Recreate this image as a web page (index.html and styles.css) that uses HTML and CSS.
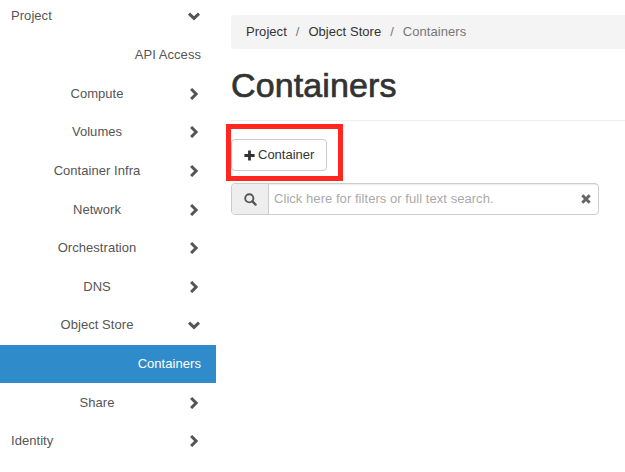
FILE: index.html
```html
<!DOCTYPE html>
<html lang="en">
<head>
<meta charset="utf-8">
<title>Containers</title>
<link rel="stylesheet" href="styles.css">
</head>
<body>
<svg width="0" height="0" class="defs">
  <symbol id="down" viewBox="0 0 12 12"><path d="M1 3.6 6 8.4l5-4.8"/></symbol>
  <symbol id="right" viewBox="0 0 12 12"><path d="M3.1 1 8.1 6l-5 5"/></symbol>
</svg>
<div class="layout">
  <nav class="sidebar">
    <a class="item top"><span>Project</span><svg class="chevron"><use href="#down"/></svg></a>
    <a class="item leaf">API Access</a>
    <a class="item"><span>Compute</span><svg class="chevron"><use href="#right"/></svg></a>
    <a class="item"><span>Volumes</span><svg class="chevron"><use href="#right"/></svg></a>
    <a class="item"><span>Container Infra</span><svg class="chevron"><use href="#right"/></svg></a>
    <a class="item"><span>Network</span><svg class="chevron"><use href="#right"/></svg></a>
    <a class="item"><span>Orchestration</span><svg class="chevron"><use href="#right"/></svg></a>
    <a class="item"><span>DNS</span><svg class="chevron"><use href="#right"/></svg></a>
    <a class="item"><span>Object Store</span><svg class="chevron"><use href="#down"/></svg></a>
    <a class="item leaf active">Containers</a>
    <a class="item"><span>Share</span><svg class="chevron"><use href="#right"/></svg></a>
    <a class="item top"><span>Identity</span><svg class="chevron"><use href="#right"/></svg></a>
  </nav>
  <main class="content">
    <div class="breadcrumb"><a>Project</a><i>/</i><a>Object Store</a><i>/</i><span>Containers</span></div>
    <h1>Containers</h1>
    <div class="toolbar">
      <button class="create"><svg width="11" height="11" viewBox="0 0 11 11"><path d="M5.5.4v10.2M.4 5.5h10.2" stroke="#333" stroke-width="2.8"/></svg>Container</button>
      <div class="highlight"></div>
    </div>
    <div class="search">
      <div class="addon"><svg width="13" height="13" viewBox="0 0 13 13" fill="none" stroke="#555"><circle cx="5.3" cy="5.3" r="4.1" stroke-width="1.9"/><path d="m8.4 8.4 3.2 3.2" stroke-width="2.3" stroke-linecap="round"/></svg></div>
      <div class="field"><span>Click here for filters or full text search.</span><svg width="10" height="10" viewBox="0 0 10 10"><path d="m1.3 1.3 7.4 7.4m0-7.4L1.3 8.7" stroke="#666" stroke-width="3"/></svg></div>
    </div>
  </main>
</div>
</body>
</html>
```
FILE: styles.css
```css
* { box-sizing: border-box; }
body {
  margin: 0;
  background: #fff;
  color: #333;
  font: 13px/18px "Liberation Sans", Arial, sans-serif;
  letter-spacing: .05px;
  overflow: hidden;
}
.defs { display: block; }
.layout { display: flex; height: 472px; }
.sidebar { width: 216px; flex: none; margin-top: -3.1px; }
.item {
  display: flex;
  align-items: center;
  height: 38.66px;
  padding: 0 16px 0 11px;
  color: #555;
}
.item span { flex: 1; padding-right: 5px; text-align: center; }
.item.top span { text-align: left; }
.item.leaf { justify-content: flex-end; padding-right: 15px; }
.item.active {
  height: 38px;
  margin-bottom: .66px;
  background: #2f8bc9;
  color: #fff;
}
.chevron {
  width: 12px;
  height: 12px;
  fill: none;
  stroke: #555;
  stroke-width: 3;
}
.content { flex: 1; min-width: 0; padding: 15px 0 0 15px; }
.breadcrumb {
  display: flex;
  align-items: center;
  height: 34px;
  padding: 0 15px;
  background: #f4f4f4;
  border-radius: 4px 0 0 4px;
}
.breadcrumb i { width: 21.6px; text-align: center; font-style: normal; color: #777; }
.breadcrumb span { color: #777; }
h1 {
  height: 72px;
  margin: 0;
  padding-top: 17px;
  border-bottom: 1px solid #eee;
  font-size: 34px;
  font-weight: 400;
  letter-spacing: .12px;
  line-height: 38px;
  -webkit-text-stroke: .7px #333;
}
.toolbar { position: relative; padding-top: 18px; height: 62px; }
.create {
  display: flex;
  align-items: center;
  gap: 3px;
  width: 96px;
  height: 32px;
  padding: 0 0 0 12px;
  border: 1px solid #ccc;
  border-radius: 4px;
  background: #fff;
  color: #333;
  font: inherit;
}
.highlight {
  position: absolute;
  left: -5px;
  top: 3px;
  width: 117px;
  height: 57px;
  border: 5px solid #ff2720;
}
.search {
  display: flex;
  width: 368px;
  height: 32px;
  border: 1px solid #ccc;
  border-radius: 4px;
  overflow: hidden;
}
.addon {
  display: flex;
  align-items: center;
  justify-content: center;
  width: 37px;
  background: #eee;
  border-right: 1px solid #ccc;
}
.field {
  display: flex;
  flex: 1;
  align-items: center;
  justify-content: space-between;
  padding: 0 7px 0 5px;
  color: #aaa;
  box-shadow: inset 0 1px 1px rgba(0, 0, 0, .075);
}
```
